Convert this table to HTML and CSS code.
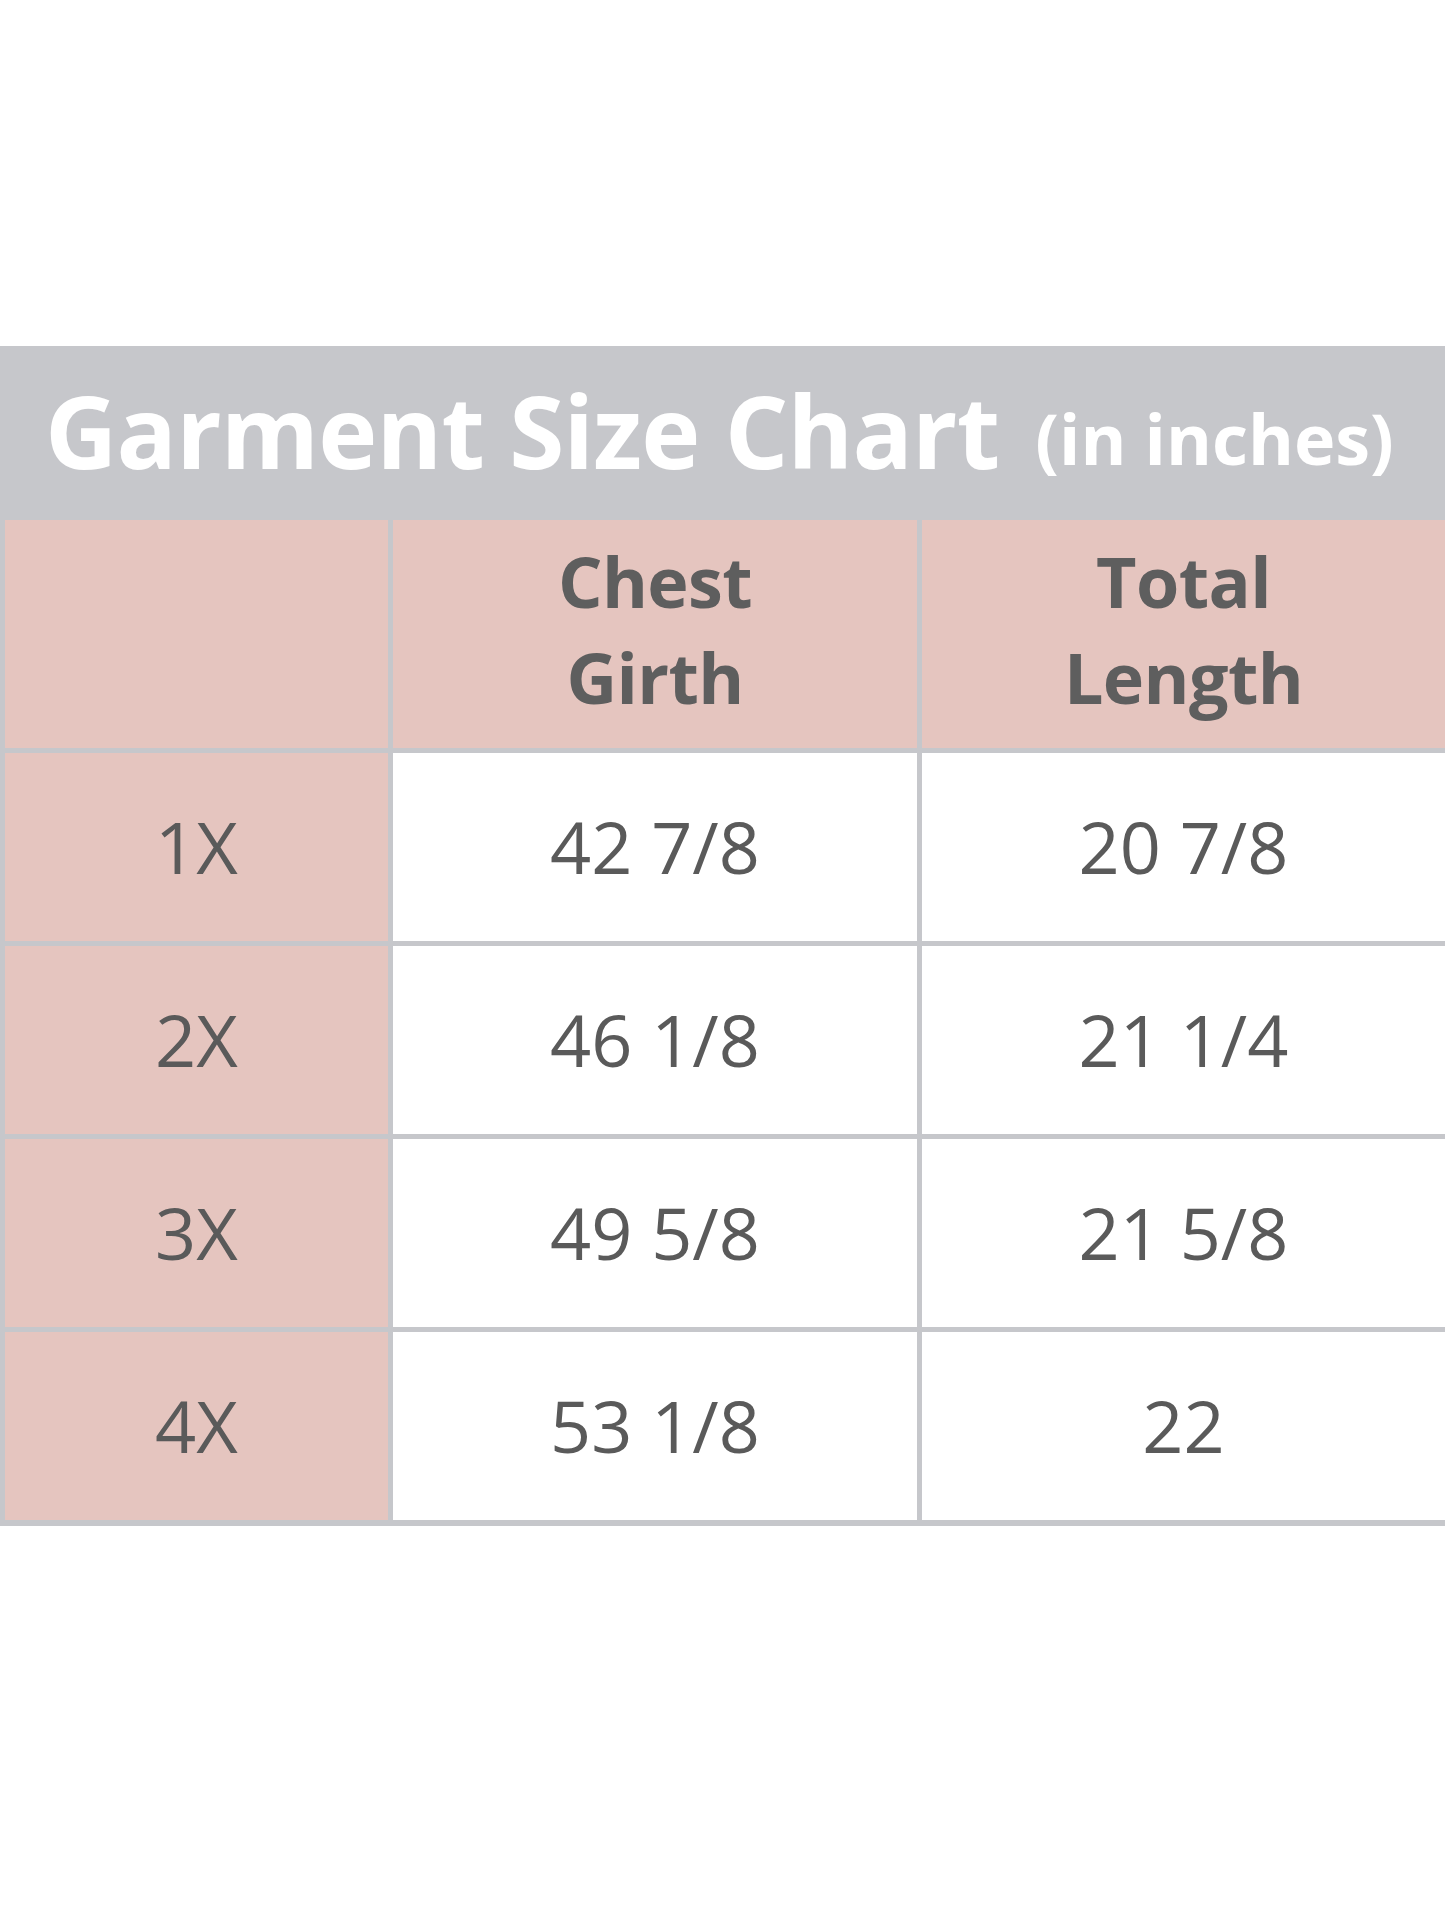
FILE: index.html
```html
<!DOCTYPE html>
<html lang="en">
<head>
<meta charset="utf-8">
<title>Garment Size Chart</title>
<link rel="stylesheet" href="styles.css">
</head>
<body>
<main class="page">
  <section class="chart">
    <h1 class="chart-title">Garment Size Chart <span class="chart-unit">(in inches)</span></h1>
    <div class="chart-grid">
      <div class="cell head-blank"></div>
      <div class="cell head">Chest<br>Girth</div>
      <div class="cell head">Total<br>Length</div>

      <div class="cell size">1X</div>
      <div class="cell value">42 7/8</div>
      <div class="cell value">20 7/8</div>

      <div class="cell size">2X</div>
      <div class="cell value">46 1/8</div>
      <div class="cell value">21 1/4</div>

      <div class="cell size">3X</div>
      <div class="cell value">49 5/8</div>
      <div class="cell value">21 5/8</div>

      <div class="cell size">4X</div>
      <div class="cell value">53 1/8</div>
      <div class="cell value">22</div>
    </div>
  </section>
</main>
</body>
</html>
```
FILE: styles.css
```css
html, body {
  margin: 0;
  padding: 0;
  background: #ffffff;
}

body {
  font-family: "Open Sans", "Liberation Sans", sans-serif;
  width: 1445px;
  height: 1927px;
  overflow: hidden;
}

.page {
  padding-top: 346px;
}

.chart {
  background: #c6c7cb;
  padding: 0 0 6px 5px;
}

.chart-title {
  margin: 0;
  height: 174px;
  display: flex;
  align-items: center;
  padding-left: 40px;
  padding-bottom: 6px;
  box-sizing: border-box;
  color: #ffffff;
  font-size: 100px;
  font-weight: 700;
  letter-spacing: -0.8px;
  white-space: nowrap;
  line-height: 1;
}

.chart-unit {
  font-size: 70px;
  margin-left: 36px;
  letter-spacing: 0;
  position: relative;
  top: 8px;
}

.chart-grid {
  display: grid;
  grid-template-columns: 383px 524px 523px;
  grid-template-rows: 228px repeat(4, 188px);
  gap: 5px;
}

.cell {
  display: flex;
  align-items: center;
  justify-content: center;
  text-align: center;
  color: #5a5a5a;
}

.head-blank,
.head,
.size {
  background: #e5c5bf;
}

.head {
  font-size: 70px;
  font-weight: 700;
  line-height: 96px;
  letter-spacing: -0.6px;
  color: #5e5e5e;
  padding-bottom: 10px;
  box-sizing: border-box;
}

.size,
.value {
  font-size: 72px;
  font-weight: 400;
  padding-bottom: 3px;
  box-sizing: border-box;
}

.value {
  background: #ffffff;
}
```
